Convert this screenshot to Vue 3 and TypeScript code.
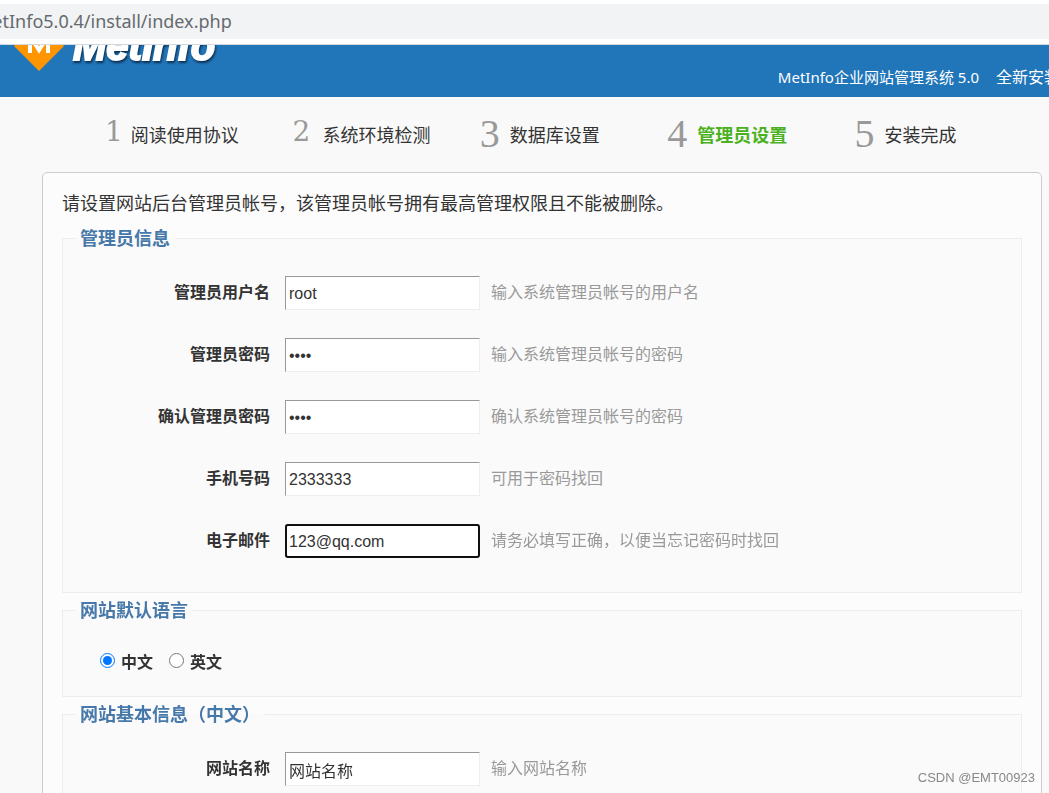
<script setup lang="ts">
import { onMounted, ref } from 'vue'

interface Step {
  no: number
  title: string
}

interface Field {
  id: string
  label: string
  type: string
  hint: string
}

const steps: Step[] = [
  { no: 1, title: '阅读使用协议' },
  { no: 2, title: '系统环境检测' },
  { no: 3, title: '数据库设置' },
  { no: 4, title: '管理员设置' },
  { no: 5, title: '安装完成' },
]
const currentStep = 4

const adminFields: Field[] = [
  { id: 'username', label: '管理员用户名', type: 'text', hint: '输入系统管理员帐号的用户名' },
  { id: 'password', label: '管理员密码', type: 'password', hint: '输入系统管理员帐号的密码' },
  { id: 'confirm', label: '确认管理员密码', type: 'password', hint: '确认系统管理员帐号的密码' },
  { id: 'mobile', label: '手机号码', type: 'text', hint: '可用于密码找回' },
  { id: 'email', label: '电子邮件', type: 'text', hint: '请务必填写正确，以便当忘记密码时找回' },
]

const values = ref<Record<string, string>>({
  username: 'root',
  password: 'root',
  confirm: 'root',
  mobile: '2333333',
  email: '123@qq.com',
})
const language = ref('cn')
const siteName = ref('网站名称')

onMounted(() => {
  const email = document.getElementById('email') as HTMLInputElement | null
  email?.focus()
  email?.setSelectionRange(email.value.length, email.value.length)
})
</script>

<template>
  <div class="window">
    <div class="toolbar">
      <div class="address"><span class="url">MetInfo5.0.4/install/index.php</span></div>
    </div>

    <header class="header">
      <svg class="logo" width="240" height="52" viewBox="0 0 240 52" role="img" aria-label="MetInfo">
        <polygon points="39,-24 64,1 39,26 14,1" fill="#ff9500" />
        <path d="M30 8V-9L39 5L48-9V8" fill="none" stroke="#fff" stroke-width="4" />
        <text class="wordmark" x="73" y="15">MetInfo</text>
      </svg>
      <nav class="links">
        <a href="#product">MetInfo企业网站管理系统 5.0</a>
        <a href="#install" class="install">全新安装</a>
      </nav>
    </header>

    <ol class="steps">
      <li v-for="s in steps" :key="s.no" :class="{ current: s.no === currentStep }">
        <span class="no" :class="{ low: s.no < 3 }">{{ s.no }}</span>
        <span class="title">{{ s.title }}</span>
      </li>
    </ol>

    <form class="card" @submit.prevent>
      <p class="intro">请设置网站后台管理员帐号，该管理员帐号拥有最高管理权限且不能被删除。</p>

      <fieldset class="admin">
        <legend>管理员信息</legend>
        <div v-for="f in adminFields" :key="f.id" class="row">
          <label :for="f.id">{{ f.label }}</label>
          <input :id="f.id" v-model="values[f.id]" :type="f.type" class="text" autocomplete="off" />
          <span class="hint">{{ f.hint }}</span>
        </div>
      </fieldset>

      <fieldset class="language">
        <legend>网站默认语言</legend>
        <div class="choices">
          <label><input v-model="language" type="radio" name="language" value="cn" />中文</label>
          <label><input v-model="language" type="radio" name="language" value="en" />英文</label>
        </div>
      </fieldset>

      <fieldset class="site">
        <legend>网站基本信息（中文）</legend>
        <div class="row">
          <label for="site-name">网站名称</label>
          <input id="site-name" v-model="siteName" type="text" class="text" autocomplete="off" />
          <span class="hint">输入网站名称</span>
        </div>
      </fieldset>
    </form>

    <div class="watermark">CSDN @EMT00923</div>
  </div>
</template>

<style>
body {
  margin: 0;
}
</style>

<style scoped>
.window {
  position: relative;
  box-sizing: border-box;
  height: 100vh;
  overflow: hidden;
  background: #f9f9f9;
  color: #333;
  font-family: 'Noto Sans', 'Noto Sans CJK SC', sans-serif;
  font-size: 16px;
}

.toolbar {
  padding: 4px 0 5px;
  background: #fff;
  border-bottom: 1px solid #d5d8dc;
}

.address {
  height: 35px;
  line-height: 35px;
  overflow: hidden;
  background: #f1f3f4;
  color: #666a6e;
  font-size: 18px;
}

.url {
  margin-left: -24px;
}

.header {
  display: flex;
  justify-content: space-between;
  height: 52px;
  overflow: hidden;
  background: #2175b9;
}

.logo {
  flex: none;
}

.wordmark {
  fill: #fff;
  stroke: #fff;
  stroke-width: 2px;
  filter: drop-shadow(1px 2px 1px #0b2f52);
  font-family: 'Liberation Sans', sans-serif;
  font-size: 40px;
  font-weight: 700;
  font-style: italic;
}

.links {
  display: flex;
  flex: none;
  gap: 17px;
  margin-right: -11px;
  padding-top: 20px;
  line-height: 24px;
}

.links a {
  color: #fff;
  font-size: 15px;
  text-decoration: none;
  white-space: nowrap;
}

.links .install {
  font-size: 16px;
}

.steps {
  display: grid;
  grid-template-columns: repeat(5, 1fr);
  height: 75px;
  margin: 0;
  padding: 0 7px 0 105px;
  list-style: none;
}

.steps li {
  display: flex;
  gap: 8px;
  white-space: nowrap;
}

.no {
  padding-top: 15px;
  color: #999;
  font-family: 'Liberation Serif', serif;
  font-size: 40px;
  line-height: 44px;
}

.no.low {
  padding-top: 13px;
  font-family: 'DejaVu Serif', serif;
  font-size: 28px;
}

.steps li + li .no {
  min-width: 22px;
}

.title {
  padding-top: 26px;
  font-size: 18px;
  line-height: 24px;
}

.current .title {
  color: #4bb11f;
  font-weight: 700;
}

.card {
  margin: 0 7px 0 42px;
  padding: 18px 19px 40px;
  background: #fcfcfc;
  border: 1px solid #ccc;
  border-radius: 5px;
}

.intro {
  margin: 0 0 11px;
  font-size: 18px;
  line-height: 24px;
}

fieldset {
  min-width: 0;
  margin: 0 0 5px;
  padding: 26px 12px 1px;
  background: #fafafa;
  border: 1px solid #ededed;
}

legend {
  padding: 0 5px;
  color: #4678a9;
  font-size: 18px;
  font-weight: 700;
  line-height: 24px;
}

.row {
  display: grid;
  grid-template-columns: 195px 195px 1fr;
  column-gap: 11px;
  height: 34px;
  margin-bottom: 28px;
  padding-left: 4px;
  line-height: 32px;
}

.admin {
  padding-bottom: 6px;
}

.row label {
  padding-right: 4px;
  font-weight: 700;
  text-align: right;
}

.text {
  box-sizing: border-box;
  width: 195px;
  height: 34px;
  padding: 1px 3px 0;
  background: #fff;
  border: 1px solid;
  border-color: #999 #eee #eee #999;
  color: #333;
  font-family: 'Liberation Sans', 'Noto Sans CJK SC', sans-serif;
  font-size: 16px;
}

.text:focus {
  outline: 2px solid #101010;
  outline-offset: -2px;
  border-radius: 3px;
}

.hint {
  color: #999;
  white-space: nowrap;
}

.language {
  padding-bottom: 2px;
}

.choices {
  display: flex;
  gap: 16px;
  padding: 2px 0 20px 25px;
}

.choices label {
  display: flex;
  align-items: center;
  gap: 6px;
  font-weight: 700;
  line-height: 24px;
}

.choices input {
  width: 15px;
  height: 15px;
  margin: 0 0 4px;
}

.watermark {
  position: absolute;
  right: 14px;
  bottom: 6px;
  color: #888;
  font-family: 'Liberation Sans', sans-serif;
  font-size: 13px;
  line-height: 18px;
}
</style>
